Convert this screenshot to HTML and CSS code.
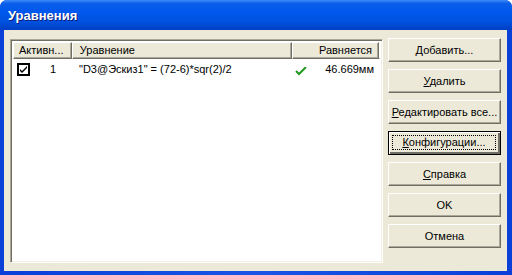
FILE: index.html
```html
<!DOCTYPE html>
<html lang="ru">
<head>
  <meta charset="UTF-8" />
  <title>Уравнения</title>
  <link rel="stylesheet" href="styles.css">
</head>
<body>
  <div class="window">
    <div class="titlebar">Уравнения</div>

    <div class="client">
      <div class="listbox">
        <div class="list-header">
          <div class="col col-active">Активн...</div>
          <div class="col col-eq">Уравнение</div>
          <div class="col col-val">Равняется</div>
          <div class="col col-rest"></div>
        </div>

        <div class="list-row">
          <div class="cell cell-active">
            <svg class="checkbox" width="13" height="13" viewBox="0 0 13 13">
              <rect x="0.5" y="0.5" width="12" height="12" fill="#fff" stroke="#000"/>
              <rect x="1.5" y="1.5" width="10" height="10" fill="none" stroke="#000"/>
              <path d="M3 6 L5 8 L10 3 L10 5 L5 10 L3 8 Z" fill="#000"/>
            </svg>
            <span class="num">1</span>
          </div>
          <div class="cell cell-eq">"D3@Эскиз1" = (72-6)*sqr(2)/2</div>
          <div class="cell cell-val">
            <svg class="ok-mark" width="12" height="9" viewBox="0 0 12 9">
              <path d="M1 4 L4 7 L11 0" fill="none" stroke="#1f9a1f" stroke-width="2"/>
            </svg>
            <span>46.669мм</span>
          </div>
        </div>
      </div>

      <div class="buttons">
        <button class="btn"><u>Д</u>обавить...</button>
        <button class="btn"><u>У</u>далить</button>
        <button class="btn"><u>Р</u>едактировать все...</button>
        <button class="btn btn-default"><span class="focus"><u>К</u>онфигурации...</span></button>
        <button class="btn"><u>С</u>правка</button>
        <button class="btn">OK</button>
        <button class="btn">Отмена</button>
      </div>
    </div>
  </div>
</body>
</html>
```

FILE: styles.css
```css
* {
  margin: 0;
  padding: 0;
  box-sizing: border-box;
}

body {
  background-color: #fff;
  font-family: "Liberation Sans", Arial, sans-serif;
  font-size: 11px;
  color: #000;
}

.window {
  width: 512px;
  height: 275px;
  display: flex;
  flex-direction: column;
  background: linear-gradient(to right, #0a3fd8, #1a55e6 50%, #0a3fd8);
  border-radius: 7px 7px 0 0;
  overflow: hidden;
}

.titlebar {
  height: 30px;
  padding: 1px 0 0 8px;
  display: flex;
  align-items: center;
  color: #fff;
  font-family: "Liberation Sans", Arial, sans-serif;
  font-weight: bold;
  font-size: 13px;
  text-shadow: 1px 1px 0 #0a1c7a;
  background: linear-gradient(to bottom, #3c8cf9 0%, #0a5de8 12%, #0058ee 40%, #0052e0 70%, #0047d0 88%, #0040c2 100%);
}

.client {
  flex: 1;
  margin: 0 5px 4px 4px;
  background-color: #ece9d8;
  display: flex;
  gap: 5px;
  padding: 9px 6px 8px 6px;
}

/* list view */
.listbox {
  width: 373px;
  background-color: #fff;
  border: 1px solid;
  border-color: #aca899 #fff #fff #aca899;
  box-shadow: inset 1px 1px 0 #716f64, inset -1px -1px 0 #f1efe2;
  padding: 2px;
}

.list-header {
  display: flex;
  height: 17px;
}

.col {
  background-color: #ece9d8;
  border: 1px solid;
  border-color: #fff #716f64 #716f64 #fff;
  box-shadow: inset -1px -1px 0 #aca899;
  line-height: 14px;
  padding: 0 5px;
  white-space: nowrap;
  overflow: hidden;
}

.col-active { width: 59px; }
.col-eq { width: 221px; padding-left: 7px; }
.col-val { width: 87px; text-align: right; padding-right: 6px; }
.col-rest { flex: 1; padding: 0; border-right: none; box-shadow: none; }

.list-row {
  display: flex;
  height: 18px;
  align-items: center;
  margin-top: 1px;
}

.cell {
  display: flex;
  align-items: center;
  white-space: nowrap;
}

.cell-active { width: 59px; padding-left: 4px; }
.cell-active .num { margin-left: 20px; }
.checkbox { display: block; }

.cell-eq {
  width: 221px;
  padding-left: 7px;
}

.cell-val {
  width: 87px;
  justify-content: space-between;
  padding: 0 6px 0 2px;
}

.ok-mark { margin-top: 5px; }

/* buttons */
.buttons {
  width: 113px;
  margin-top: -1px;
  display: flex;
  flex-direction: column;
  gap: 7px;
}

.btn {
  height: 24px;
  width: 113px;
  background-color: #ece9d8;
  font-family: "Liberation Sans", Arial, sans-serif;
  font-size: 11px;
  color: #000;
  border: 1px solid;
  border-color: #fff #716f64 #716f64 #fff;
  box-shadow: inset -1px -1px 0 #aca899;
  text-align: center;
}

.btn-default {
  border: 1px solid #000;
  box-shadow: inset 1px 1px 0 #fff, inset -2px -2px 0 #716f64, inset -1px -1px 0 #716f64;
  padding: 3px 4px 4px 3px;
}

.btn-default .focus {
  display: block;
  height: 100%;
  border: 1px dotted #000;
  line-height: 13px;
}
```
